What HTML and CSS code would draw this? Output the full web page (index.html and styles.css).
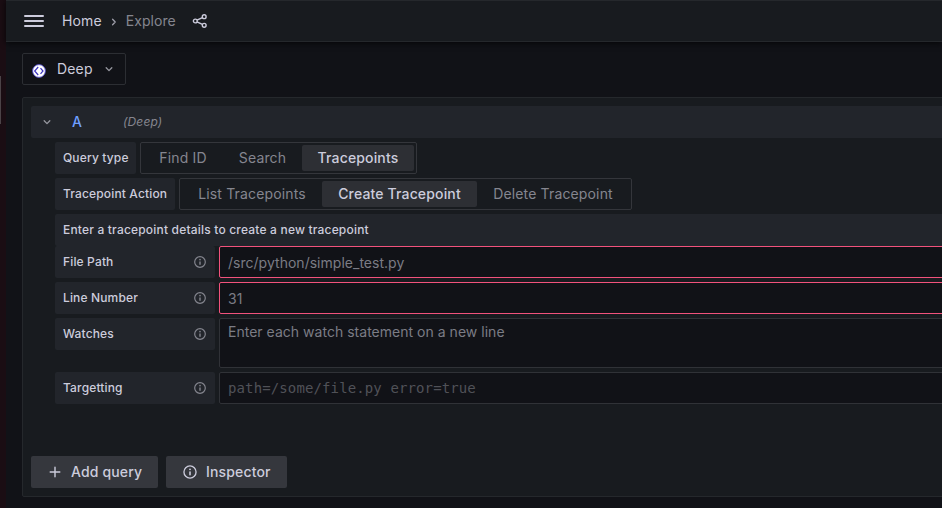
FILE: index.html
```html
<!DOCTYPE html>
<html lang="en">
<head>
<meta charset="utf-8">
<title>Explore</title>
<link rel="stylesheet" href="styles.css">
</head>
<body>
<svg class="defs" aria-hidden="true">
  <symbol id="info" viewBox="0 0 24 24"><circle cx="12" cy="12" r="9.1" fill="none" stroke="currentColor" stroke-width="2"/><path d="M12 12v4" stroke="currentColor" stroke-width="2.4" stroke-linecap="round"/><circle cx="12" cy="8" r="1.4" fill="currentColor"/></symbol>
  <symbol id="down" viewBox="0 0 24 24"><path d="M7.8 10.2l4.2 4.2 4.2-4.2" fill="none" stroke="currentColor" stroke-width="2" stroke-linecap="round" stroke-linejoin="round"/></symbol>
</svg>
<div class="edge"><span class="edge-handle"></span></div>
<div class="app">
  <header class="topbar">
    <span class="menu"><i></i><i></i><i></i></span>
    <span class="home">Home</span>
    <svg class="crumb-sep" viewBox="0 0 16 16"><path d="M6.6 5.2l2.6 2.8-2.6 2.8" fill="none" stroke="currentColor" stroke-width="1.3" stroke-linecap="round" stroke-linejoin="round"/></svg>
    <span class="current">Explore</span>
    <svg class="share" viewBox="0 0 16 16" fill="none" stroke="currentColor" stroke-width="1.4"><circle cx="3.3" cy="8" r="1.9"/><circle cx="12.2" cy="3.7" r="1.9"/><circle cx="12.2" cy="12.3" r="1.9"/><path d="M5 7.2l5.4-2.6M5 8.8l5.4 2.6"/></svg>
  </header>
  <main class="content">
    <div class="picker">
      <svg class="logo" viewBox="0 0 14 14"><circle cx="7" cy="7" r="6.4" fill="#fff" stroke="#5048c8" stroke-width=".9"/><path d="M6.2 3L2.7 7l3.5 4M8.5 4.2L11 7l-2.5 2.8" fill="none" stroke="#3c32c0" stroke-width="1.2"/></svg>
      <span class="picker-name">Deep</span>
      <svg class="chev"><use href="#down"/></svg>
    </div>
    <section class="panel">
      <div class="query-head">
        <svg class="chev"><use href="#down"/></svg>
        <span class="ref">A</span>
        <em class="source">(Deep)</em>
      </div>
      <div class="rows">
        <div class="row">
          <div class="label">Query type</div>
          <div class="radio"><span class="find">Find ID</span><span class="search">Search</span><span class="active points">Tracepoints</span></div>
        </div>
        <div class="row">
          <div class="label action">Tracepoint Action</div>
          <div class="radio"><span class="list">List Tracepoints</span><span class="active create">Create Tracepoint</span><span class="delete">Delete Tracepoint</span></div>
        </div>
        <div class="label note">Enter a tracepoint details to create a new tracepoint</div>
        <div class="row">
          <div class="label field">File Path<svg class="info"><use href="#info"/></svg></div>
          <div class="input invalid">/src/python/simple_test.py</div>
        </div>
        <div class="row">
          <div class="label field">Line Number<svg class="info"><use href="#info"/></svg></div>
          <div class="input invalid">31</div>
        </div>
        <div class="row">
          <div class="label field">Watches<svg class="info"><use href="#info"/></svg></div>
          <div class="input area">Enter each watch statement on a new line</div>
        </div>
        <div class="row">
          <div class="label field">Targetting<svg class="info"><use href="#info"/></svg></div>
          <div class="input code">path=/some/file.py error=true</div>
        </div>
      </div>
      <div class="actions">
        <div class="button add"><svg viewBox="0 0 16 16"><path d="M8 3.2v9.6M3.2 8h9.6" stroke="currentColor" stroke-width="1.4" stroke-linecap="round"/></svg>Add query</div>
        <div class="button inspect"><svg><use href="#info"/></svg>Inspector</div>
      </div>
    </section>
  </main>
</div>
</body>
</html>
```
FILE: styles.css
```css
* { box-sizing: border-box; }
body {
  margin: 0;
  height: 508px;
  display: flex;
  overflow: hidden;
  background: #111217;
  color: #ccccdc;
  font: 14px/22px Inter, "Liberation Sans", sans-serif;
  letter-spacing: 0.15px;
}
svg { flex: none; display: block; }
.defs { position: absolute; width: 0; height: 0; }
.edge { width: 6px; flex: none; background: #1a0d13; padding-top: 76px; }
.edge-handle { display: block; width: 1px; height: 48px; background: #4b4347; }
.app { flex: 1; min-width: 0; }
.topbar {
  height: 42px;
  display: flex;
  align-items: center;
  padding-left: 18px;
  background: #181b1f;
  border-top: 1px solid #25282c;
  border-bottom: 1px solid #25282c;
  box-shadow: 0 1px 6px #050507;
}
.menu { display: grid; gap: 3px; width: 20px; margin-right: 18px; }
.menu i { height: 2px; border-radius: 1px; background: #ccccdc; }
.crumb-sep { width: 16px; height: 16px; margin: 1px 4px 0 4px; color: #9d9da8; }
.current { color: #85868f; letter-spacing: 0.05px; }
.share { width: 16px; height: 16px; margin-left: 16px; }
.content { padding: 11px 0 0 16px; }
.picker {
  width: 104px;
  height: 32px;
  display: flex;
  align-items: center;
  padding-left: 9px;
  border: 1px solid #2c2e33;
  border-radius: 2px;
}
.logo { width: 14px; height: 14px; margin: 3px 11px 0 0; }
.chev { width: 16px; height: 16px; color: #96979f; }
.picker .chev { margin-left: 8px; }
.panel {
  height: 400px;
  margin: 12px -4px 0 0;
  padding: 8px 0 0 8px;
  background: #181b1f;
  border: 1px solid #25282c;
  border-radius: 2px;
}
.query-head {
  height: 32px;
  display: flex;
  align-items: center;
  padding-left: 8px;
  background: #22252b;
  border-radius: 2px;
}
.ref { width: 51px; margin-left: 17px; color: #6e9fff; font-weight: 500; }
.source { font-size: 12px; color: #85868f; }
.rows { display: grid; gap: 4px; margin: 4px 0 0 24px; }
.row { display: flex; gap: 4px; }
.label {
  width: 81px;
  height: 32px;
  flex: none;
  display: flex;
  align-items: center;
  padding: 0 8px;
  background: #22252b;
  border-radius: 2px;
  font-size: 12px;
  font-weight: 500;
  letter-spacing: 0.15px;
  white-space: nowrap;
}
.action { width: 120px; }
.note { width: auto; margin-bottom: -4px; letter-spacing: 0.19px; }
.field { width: 160px; justify-content: space-between; }
.info { width: 14px; height: 14px; color: #85868f; }
.radio {
  height: 32px;
  display: flex;
  padding: 2px;
  border: 1px solid #34363b;
  border-radius: 2px;
  color: #85868f;
}
.radio span { display: flex; align-items: center; justify-content: center; border-radius: 2px; white-space: nowrap; }
.radio .active { color: #ccccdc; background: #2d2f34; font-weight: 500; }
.find { width: 80px; }
.search { width: 79px; }
.points { width: 112px; }
.list { width: 140px; }
.create { width: 155px; }
.delete { width: 152px; }
.input {
  flex: 1;
  height: 32px;
  padding: 5px 8px;
  background: #111217;
  border: 1px solid #303237;
  border-radius: 2px;
  color: #7b7c85;
  letter-spacing: 0.02px;
}
.invalid { border-color: #f2527c; }
.area { height: 50px; padding-top: 2px; }
.code { color: #505157; font-family: "DejaVu Sans Mono", monospace; letter-spacing: 0.12px; padding-top: 4px; }
.actions { display: flex; gap: 8px; margin-top: 52px; }
.button {
  width: 127px;
  height: 32px;
  display: flex;
  align-items: center;
  gap: 8px;
  padding-left: 16px;
  background: #35373d;
  border-radius: 2px;
  font-weight: 500;
}
.button svg { width: 16px; height: 16px; }
.inspect { width: 121px; }
```
